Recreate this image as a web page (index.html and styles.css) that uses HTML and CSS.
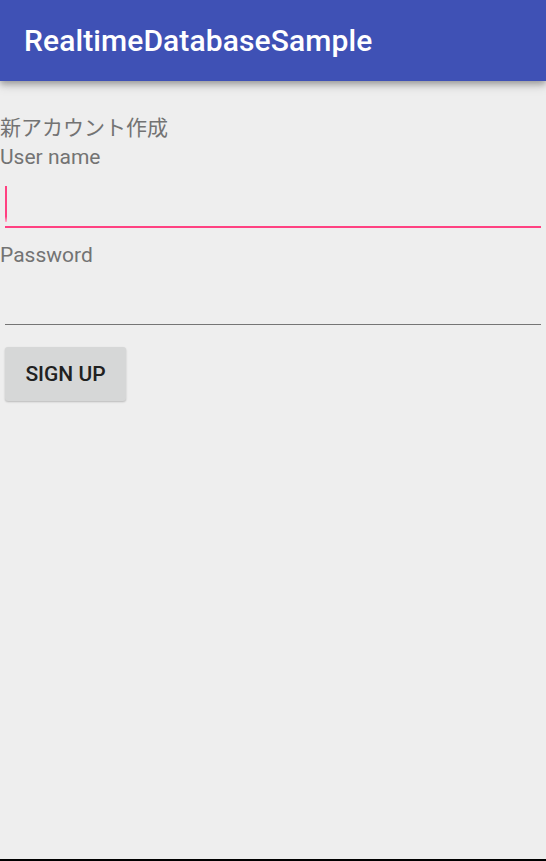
FILE: index.html
```html
<!DOCTYPE html>
<html>
<head>
<meta charset="utf-8">
<link rel="stylesheet" href="styles.css">
</head>
<body>
<div class="screen">
  <header class="appbar"><span class="title">RealtimeDatabaseSample</span></header>
  <main class="content">
    <div class="heading">新アカウント作成</div>
    <div class="label user">User name</div>
    <div class="field focused"><span class="cursor"></span></div>
    <div class="label pw">Password</div>
    <div class="field"></div>
    <button class="btn">SIGN UP</button>
  </main>
  <div class="bottom-line"></div>
</div>
</body>
</html>
```
FILE: styles.css
```css
html, body { margin: 0; padding: 0; }
body { background: #eeeeee; font-family: Roboto, "Noto Sans CJK JP", sans-serif; }
.screen { width: 546px; height: 861px; display: flex; flex-direction: column; background: #eeeeee; }
.appbar {
  height: 81px; background: #3f51b5; display: flex; align-items: center; padding-left: 24px;
  box-shadow: 0 3px 6px rgba(0,0,0,0.28), 0 6px 10px rgba(0,0,0,0.10);
  position: relative; z-index: 1; flex-shrink: 0; box-sizing: border-box;
}
.title { color: #fff; font-size: 30px; font-weight: 500; letter-spacing: 0.1px; }
.content { flex: 1; display: flex; flex-direction: column; align-items: flex-start; padding-top: 31px; }
.heading, .label { color: #737373; font-size: 21px; line-height: 29px; }
.heading { font-family: "Noto Sans CJK JP", Roboto, sans-serif; }
.user { margin-top: 2px; }
.field { align-self: stretch; margin: 0 5px; height: 54px; border-bottom: 1px solid #757575; display: flex; align-items: flex-start; }
.field.focused { border-bottom: 2px solid #ff4081; }
.cursor { width: 2px; height: 36px; margin-top: 14px; background: linear-gradient(#ff4081, #ff4081 85%, #ffb3cc); }
.pw { margin-top: 13px; }
.btn {
  margin: 22px 0 0 5px; width: 121px; height: 54px; background: #d6d7d7; border: none; border-radius: 3px;
  box-shadow: 0 1px 2px rgba(0,0,0,0.22); font-family: Roboto, sans-serif; font-size: 21px; font-weight: 500;
  color: #212121; padding: 0;
}
.bottom-line { height: 2px; background: #000; flex-shrink: 0; }
```
